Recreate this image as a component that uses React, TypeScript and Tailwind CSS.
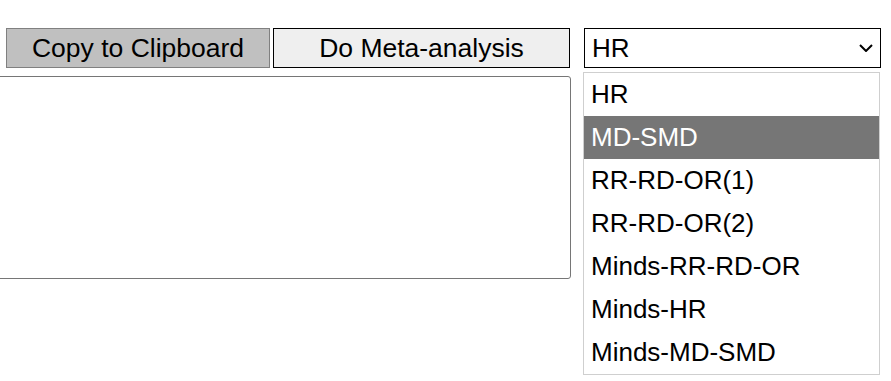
const OPTIONS = [
  'HR',
  'MD-SMD',
  'RR-RD-OR(1)',
  'RR-RD-OR(2)',
  'Minds-RR-RD-OR',
  'Minds-HR',
  'Minds-MD-SMD',
]

export default function App() {
  const active = 'MD-SMD'

  return (
    <div
      className="w-[891px] h-[381px] overflow-hidden bg-white text-black pt-[28px] flex"
      style={{ fontFamily: '"Liberation Sans", Arial, sans-serif' }}
    >
      {/* left column: buttons + output box */}
      <div className="w-[571px] flex flex-col shrink-0">
        <div className="flex gap-[3px] pl-[6px]">
          <button className="w-[264px] h-[40px] bg-[#c0c0c0] border border-[#808080] text-[26.5px] leading-none">
            Copy to Clipboard
          </button>
          <button className="w-[297px] h-[40px] bg-[#efefef] border border-black text-[26.5px] leading-none">
            Do Meta-analysis
          </button>
        </div>
        <textarea
          className="mt-[8px] -ml-[4px] w-[575px] h-[203px] border border-[#767676] rounded-[3px] resize-none outline-none"
          readOnly
        />
      </div>

      {/* right column: select with open list */}
      <div className="relative ml-[13px] w-[297px] shrink-0">
        <div className="h-[40px] border border-black bg-white flex items-center justify-between pl-[7px] pr-[6px] text-[26px] leading-none">
          <span>HR</span>
          <svg width="14" height="8" viewBox="0 0 14 8" className="mr-[1px]">
            <polyline points="1,1 7,7 13,1" fill="none" stroke="black" strokeWidth="2" />
          </svg>
        </div>
        <div className="absolute top-[44px] left-[-1px] w-[297px] bg-white border border-[#cfcfcf] flex flex-col">
          {OPTIONS.map((opt) => (
            <div
              key={opt}
              className={
                opt === active
                  ? 'h-[43px] flex items-center pl-[7px] pb-[2px] text-[26px] leading-none bg-[#767676] text-white'
                  : 'h-[43px] flex items-center pl-[7px] pb-[2px] text-[26px] leading-none'
              }
            >
              {opt}
            </div>
          ))}
        </div>
      </div>
    </div>
  )
}
